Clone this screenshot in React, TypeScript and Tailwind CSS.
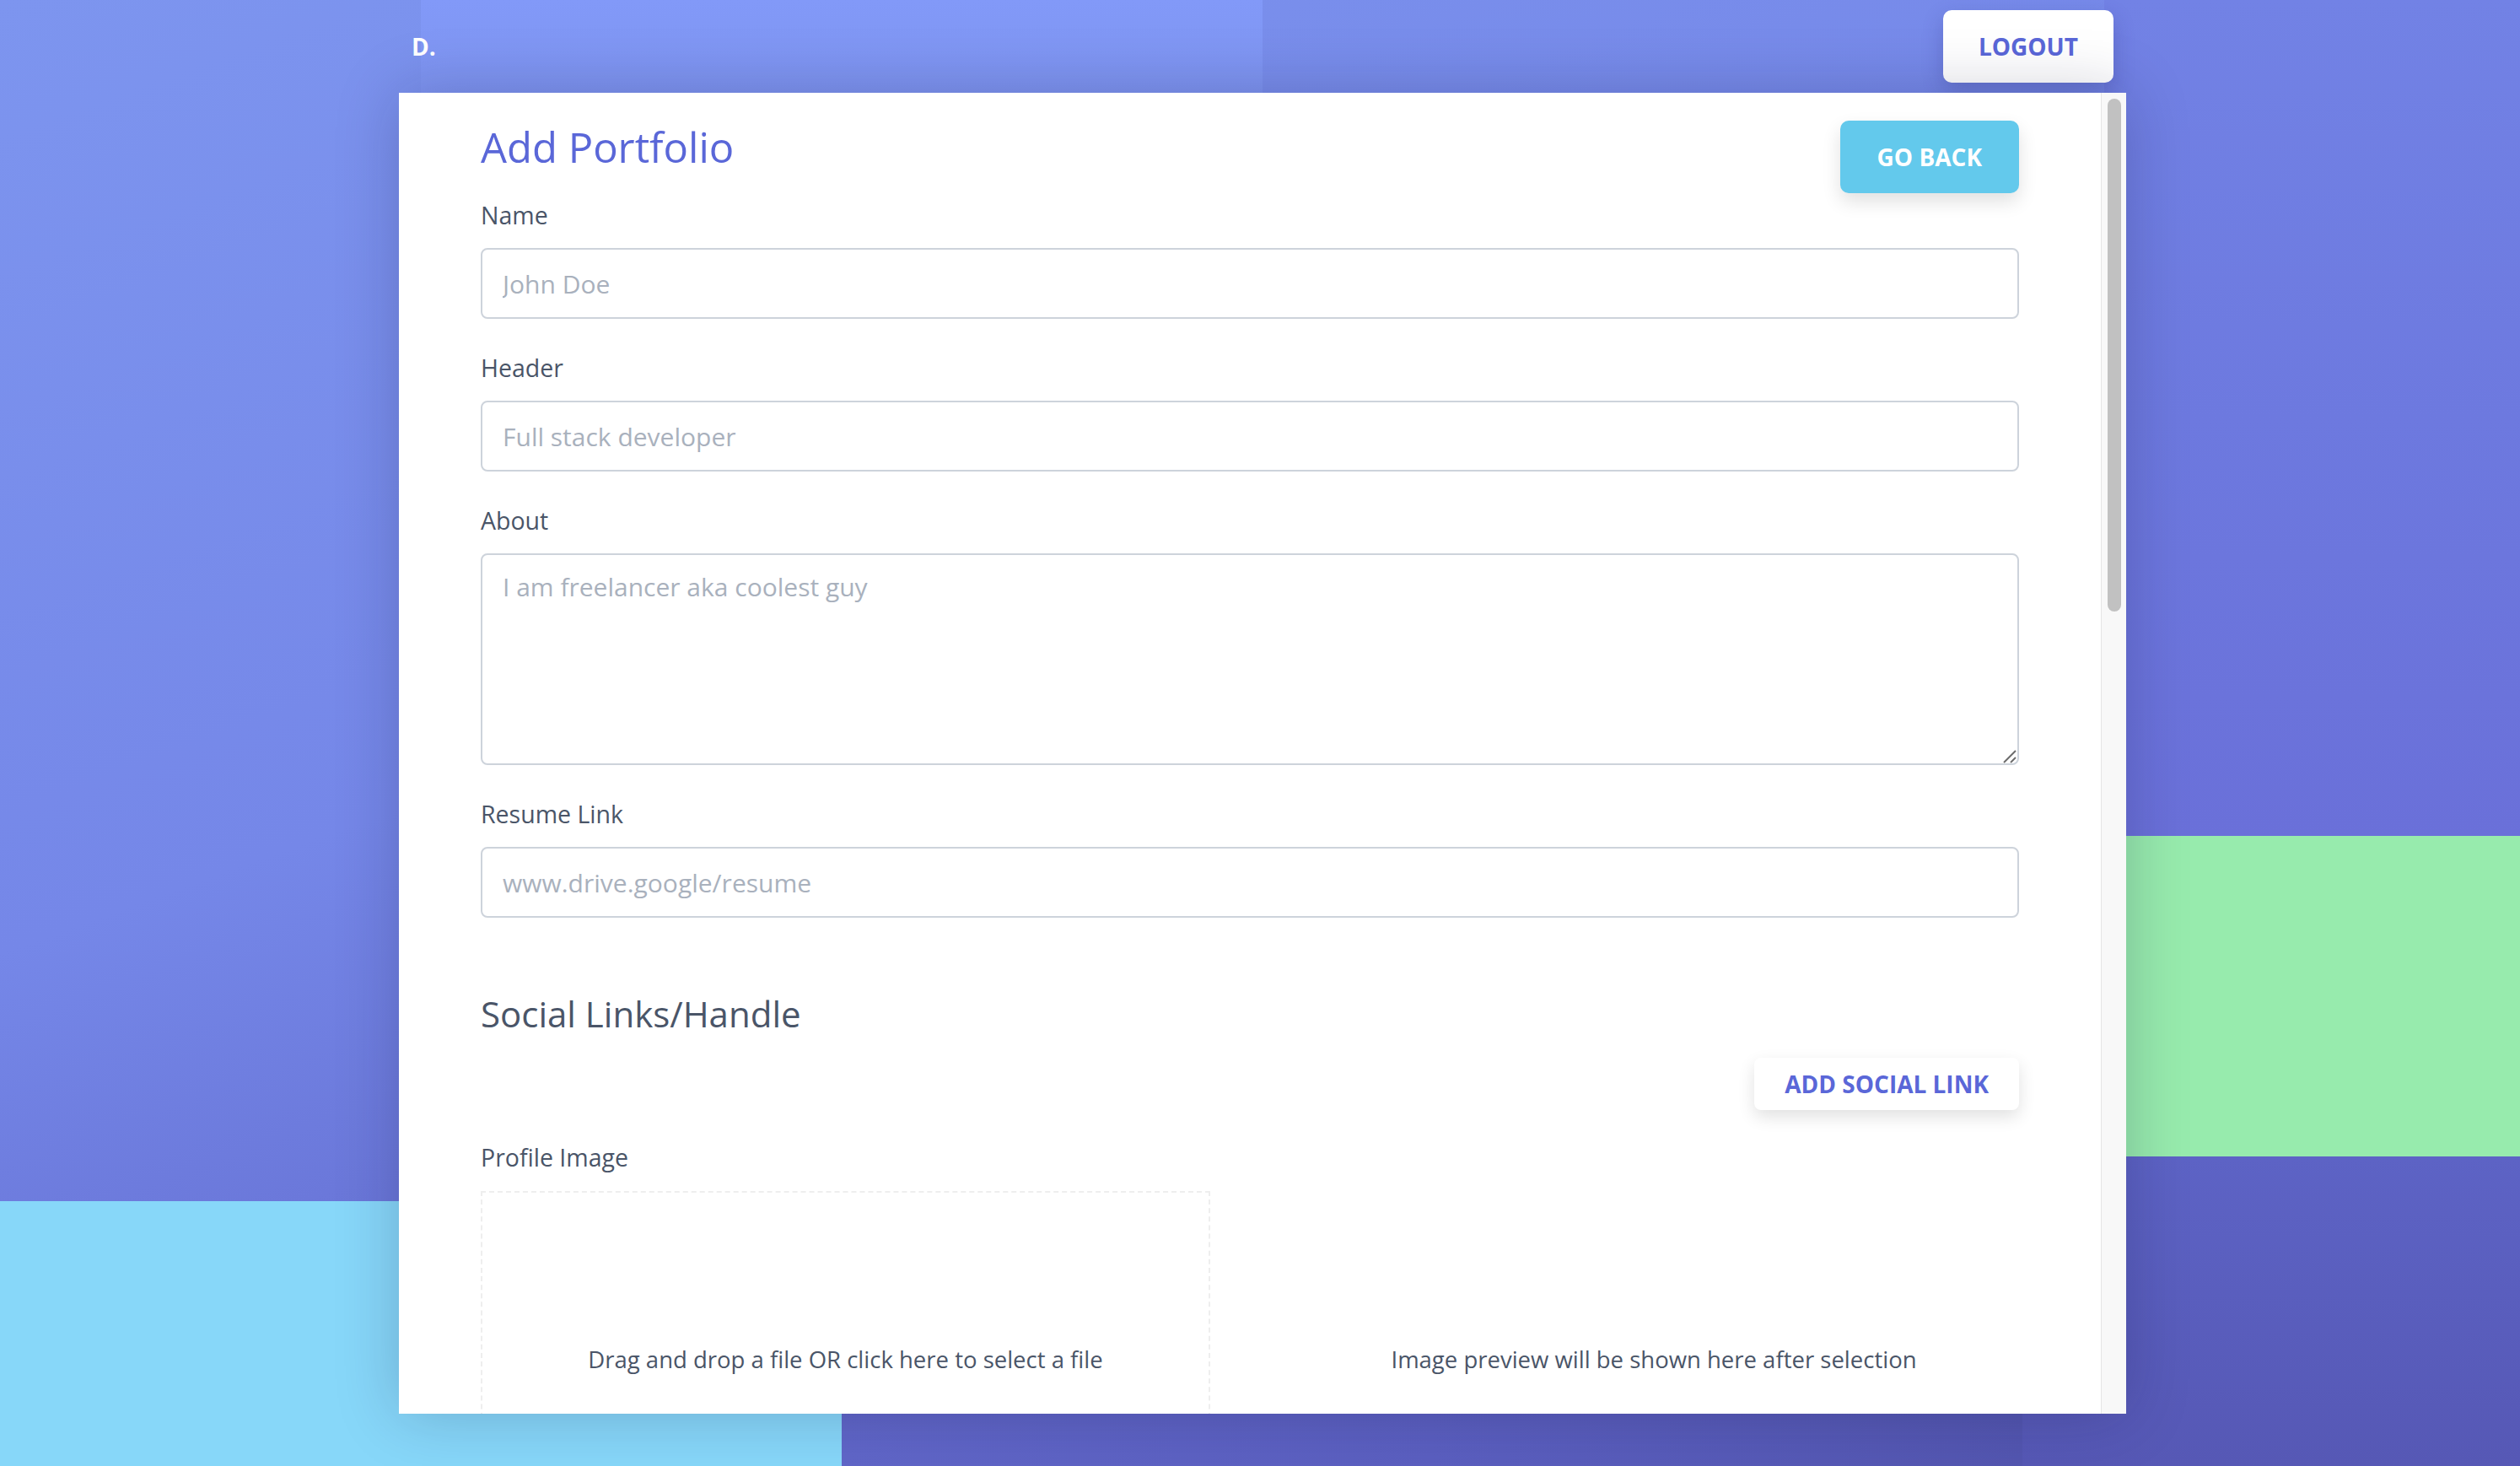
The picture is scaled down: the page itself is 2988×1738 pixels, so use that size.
import React from "react";

function Field({
  label,
  placeholder,
  first,
}: {
  label: string;
  placeholder: string;
  first?: boolean;
}) {
  return (
    <div className={first ? "mt-[5px] flex flex-col" : "mt-[37px] flex flex-col"}>
      <label className="text-[28.5px] leading-[42px] text-[#4a5568]">{label}</label>
      <input
        placeholder={placeholder}
        className="mt-[18px] h-[84px] w-full rounded-[8px] border-2 border-[#cdd3db] bg-white pl-[24px] pr-[24px] text-[30px] text-[#4a5568] outline-none placeholder:text-[#a9b1bd]"
      />
    </div>
  );
}

export default function App() {
  return (
    <div className="relative h-[1738px] w-[2988px] overflow-hidden bg-[linear-gradient(160deg,#7d95ef_0%,#7587e8_40%,#6169cc_70%,#5456b2_100%)] font-['Open_Sans',sans-serif]">
      {/* decorative background blocks */}
      <div className="absolute left-[499px] top-0 h-[700px] w-[998px] bg-[linear-gradient(180deg,#8299f8_0%,#7d93ee_20%,#7a8ee9_100%)]" />
      <div className="absolute left-[2495px] top-0 h-[991px] w-[493px] bg-[linear-gradient(180deg,#7282e5_0%,#6d79df_50%,#6a70d9_100%)]" />
      <div className="absolute left-[2300px] top-[991px] h-[380px] w-[688px] bg-[#97ebad]" />
      <div className="absolute left-[2300px] top-[1371px] h-[367px] w-[688px] bg-[linear-gradient(180deg,#5d63c5_0%,#5658b5_100%)]" />
      <div className="absolute left-[998px] top-[1500px] h-[238px] w-[1400px] bg-[linear-gradient(90deg,#6066c8_0%,#5b5fc0_50%,#5356b0_100%)]" />
      <div className="absolute left-0 top-[1424px] h-[314px] w-[998px] bg-[#87d7f9]" />

      {/* main */}
      <div className="relative ml-[473px] flex h-full w-[2048px] flex-col pb-[62px]">
        <header className="flex h-[110px] shrink-0 items-center justify-between px-[15px]">
          <div className="text-[28px] font-bold text-white">D.</div>
          <button className="h-[86px] rounded-[10px] bg-white px-[42px] text-[28px] font-bold text-[#5a67d8] shadow-[0_10px_24px_rgba(40,40,120,0.25)]">
            LOGOUT
          </button>
        </header>

        <div className="flex min-h-0 flex-1 bg-white shadow-[0_0_70px_rgba(20,20,60,0.22)]">
          <div className="min-w-0 flex-1 overflow-hidden px-[97px] pt-[33px]">
            <div className="flex items-start justify-between">
              <h1 className="text-[49px] font-normal leading-[62px] text-[#5a67d8]">Add Portfolio</h1>
              <button className="h-[86px] rounded-[10px] bg-[#63c9ec] px-[44px] text-[28px] font-bold text-white shadow-[0_10px_22px_rgba(0,0,0,0.12)]">
                GO BACK
              </button>
            </div>

            <Field first label="Name" placeholder="John Doe" />
            <Field label="Header" placeholder="Full stack developer" />

            <div className="mt-[37px] flex flex-col">
              <label className="text-[28.5px] leading-[42px] text-[#4a5568]">About</label>
              <div className="relative mt-[18px]">
                <textarea
                  placeholder="I am freelancer aka coolest guy"
                  className="block h-[251px] w-full resize-none rounded-[8px] border-2 border-[#cdd3db] bg-white px-[24px] pt-[17px] text-[30px] leading-[42px] text-[#4a5568] outline-none placeholder:text-[#a9b1bd]"
                />
                <svg
                  className="pointer-events-none absolute bottom-[2px] right-[3px]"
                  width="16"
                  height="16"
                  viewBox="0 0 16 16"
                >
                  <line x1="1" y1="15" x2="15" y2="1" stroke="#6b6b6b" strokeWidth="2" />
                  <line x1="9" y1="15" x2="15" y2="9" stroke="#6b6b6b" strokeWidth="2" />
                </svg>
              </div>
            </div>

            <Field label="Resume Link" placeholder="www.drive.google/resume" />

            <h2 className="mt-[86px] text-[42px] font-normal leading-[55px] text-[#4a5568]">
              Social Links/Handle
            </h2>

            <div className="mt-[25px] flex justify-end">
              <button className="h-[62px] rounded-[8px] bg-white px-[36px] text-[28px] font-bold text-[#5a67d8] shadow-[0_8px_20px_rgba(0,0,0,0.12)]">
                ADD SOCIAL LINK
              </button>
            </div>

            <div className="mt-[35px] text-[28.5px] leading-[42px] text-[#4a5568]">Profile Image</div>

            <div className="mt-[19px] flex">
              <div className="flex h-[400px] w-[865px] shrink-0 items-center justify-center border-2 border-dashed border-[#eeeeee] text-[27.5px] text-[#4a5568]">
                Drag and drop a file OR click here to select a file
              </div>
              <div className="ml-[93px] flex h-[400px] flex-1 items-center justify-center text-[27.5px] text-[#4a5568]">
                Image preview will be shown here after selection
              </div>
            </div>
          </div>

          <div className="w-[30px] shrink-0 border-l border-[#e6e6e6] bg-[#f8f8f8]">
            <div className="ml-[7px] mt-[7px] h-[608px] w-[16px] rounded-full bg-[#c1c1c1]" />
          </div>
        </div>
      </div>
    </div>
  );
}
